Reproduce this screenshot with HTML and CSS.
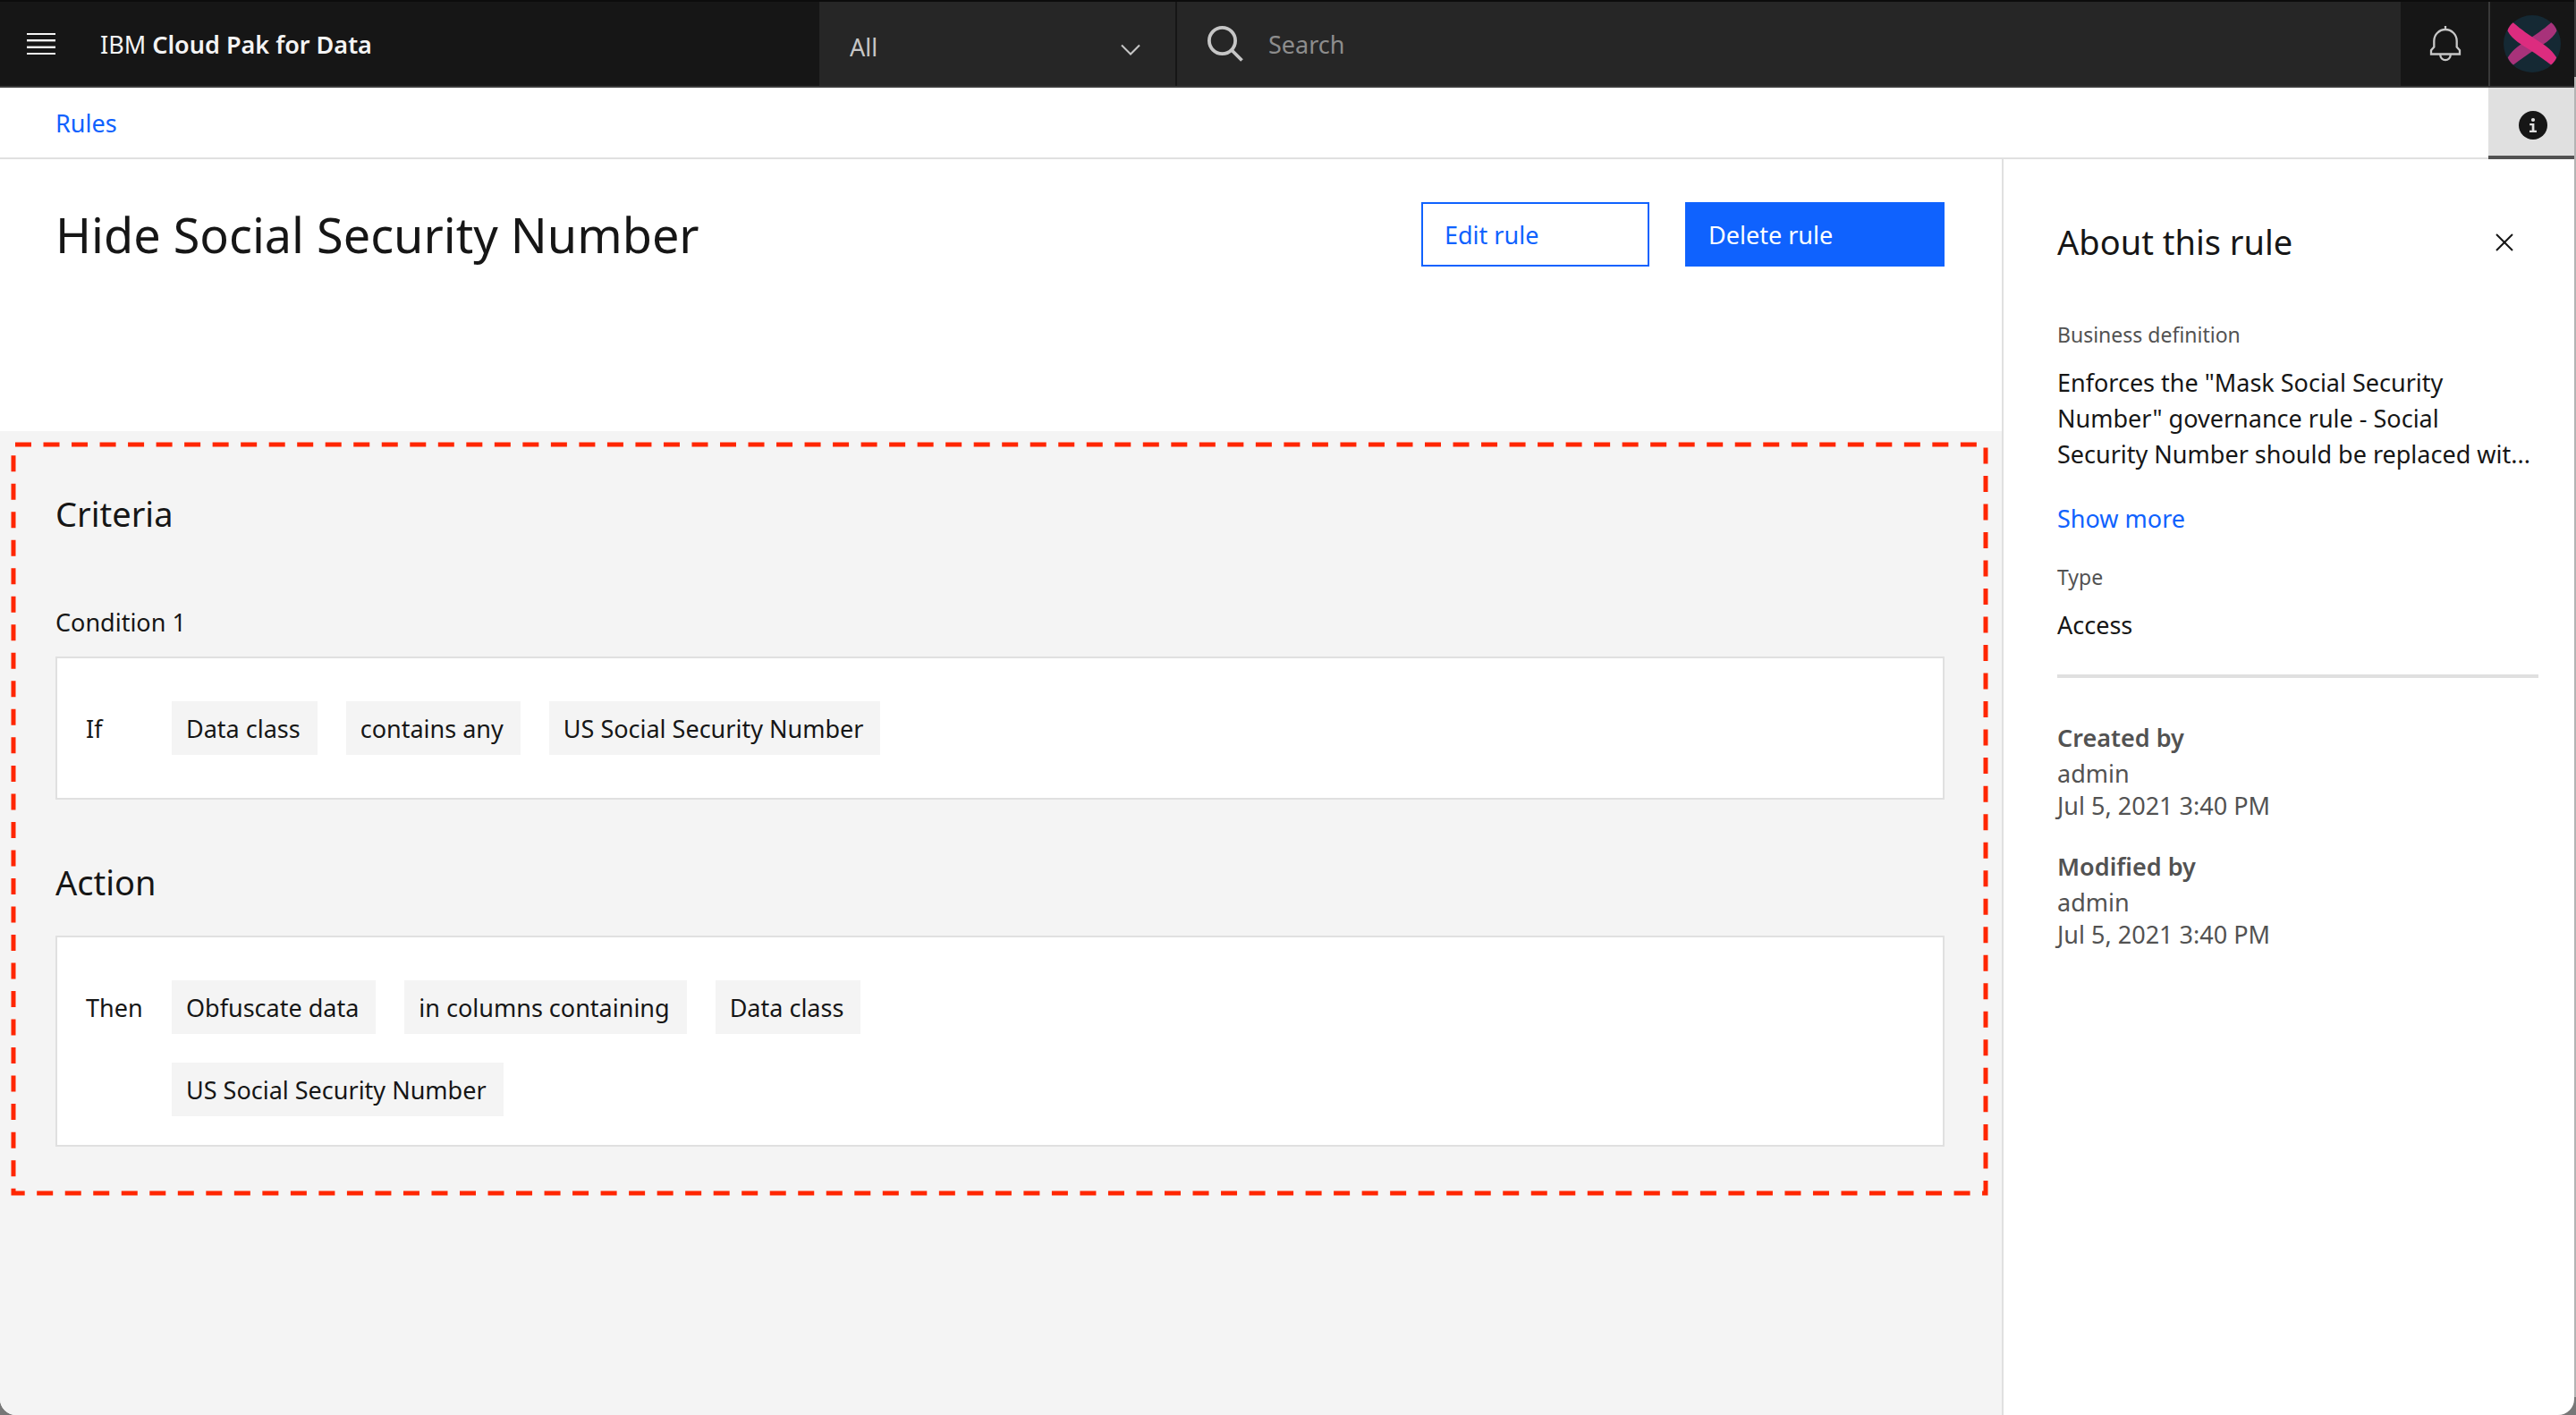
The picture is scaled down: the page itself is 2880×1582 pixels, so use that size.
FILE: index.html
```html
<!DOCTYPE html>
<html lang="en">
<head>
  <meta charset="utf-8">
  <title>Hide Social Security Number</title>
  <link rel="stylesheet" href="styles.css">
</head>
<body>
  <div class="app">
    <header class="topbar">
      <div class="brand-area">
        <button class="icon-button menu-button" type="button" aria-label="Menu">
          <svg width="32" height="24" viewBox="0 0 32 24" fill="currentColor" aria-hidden="true">
            <rect width="32" height="2"/><rect y="7" width="32" height="2.4"/><rect y="14.6" width="32" height="2.4"/><rect y="22" width="32" height="2"/>
          </svg>
        </button>
        <a class="brand" href="#">IBM <strong>Cloud Pak for Data</strong></a>
      </div>
      <div class="scope">
        <select class="scope-select" aria-label="Search scope">
          <option>All</option>
        </select>
        <svg class="scope-chevron" width="22" height="14" viewBox="0 0 22 14" fill="none" stroke="currentColor" stroke-width="2" aria-hidden="true"><path d="M1 1.5 11 11.5 21 1.5"/></svg>
      </div>
      <label class="search">
        <svg width="40" height="40" viewBox="0 0 40 40" fill="none" stroke="currentColor" stroke-width="3.8" aria-hidden="true"><circle cx="16.5" cy="16.5" r="14.600"/><path d="M27 27 38.5 38.5"/></svg>
        <input class="search-input" type="search" placeholder="Search" aria-label="Search">
      </label>
      <button class="icon-button bell-button" type="button" aria-label="Notifications">
        <svg width="36" height="40" viewBox="0 0 36 40" fill="none" stroke="currentColor" stroke-width="2.3" aria-hidden="true">
          <path d="M18 0V4M18 4A12.700 12.700 0 0 0 5.300 16.700V23.500L2 27.200V31.500H34V27.200L30.700 23.500V16.700A12.700 12.700 0 0 0 18 4Z"/><path d="M12.300 31.500V32.500A5.700 5.700 0 0 0 23.700 32.500V31.500"/>
        </svg>
      </button>
      <button class="icon-button avatar-button" type="button" aria-label="Account">
        <svg width="64" height="64" viewBox="0 0 64 64" aria-hidden="true">
          <circle cx="32" cy="32" r="32" fill="#152934"/>
          <path fill="#a8327a" d="M53.300 8.200Q58.300 12 59.500 17.500C54 28 43 33 35 38.500S19 49 11 55.500Q6 51.500 4.800 47.200C11 37 20 32.500 28 27S43 17 53.300 8.200Z"/>
          <path fill="#dc2c7f" d="M10.700 8.200Q5.700 12 4.500 17.500C10 28 21 33 29 38.500S45 49 53 55.500Q58 51.500 59.200 47.200C53 37 44 32.500 36 27S21 17 10.700 8.200Z"/>
        </svg>
      </button>
    </header>

    <nav class="crumbs" aria-label="Breadcrumb">
      <a class="link" href="#">Rules</a>
      <button class="icon-button info-button" type="button" aria-label="About this rule" aria-pressed="true">
        <svg width="32" height="32" viewBox="0 0 32 32" aria-hidden="true"><circle cx="16" cy="16" r="16" fill="#161616"/><circle cx="16" cy="10" r="2.100" fill="#e0e0e0"/><path fill="#e0e0e0" d="M12.200 14H17.400V21.800H20V24H12V21.800H14.700V16.200H12.200Z"/></svg>
      </button>
    </nav>

    <div class="layout">
      <main class="content">
        <div class="title-block">
          <h1 class="title">Hide Social Security Number</h1>
          <div class="actions">
            <button class="button button-outline" type="button">Edit rule</button>
            <button class="button button-primary" type="button">Delete rule</button>
          </div>
        </div>

        <section class="rule">
          <svg class="highlight" aria-hidden="true"><rect class="highlight-line" width="100%" height="100%"/></svg>
          <h2 class="heading criteria-heading">Criteria</h2>
          <h3 class="condition">Condition 1</h3>
          <div class="card">
            <span class="keyword">If</span>
            <ul class="tags">
              <li class="tag">Data class</li>
              <li class="tag">contains any</li>
              <li class="tag">US Social Security Number</li>
            </ul>
          </div>
          <h2 class="heading action-heading">Action</h2>
          <div class="card">
            <span class="keyword">Then</span>
            <ul class="tags">
              <li class="tag">Obfuscate data</li>
              <li class="tag">in columns containing</li>
              <li class="tag">Data class</li>
              <li class="tag">US Social Security Number</li>
            </ul>
          </div>
        </section>
      </main>

      <aside class="about">
        <div class="about-header">
          <h2 class="heading">About this rule</h2>
          <button class="icon-button close-button" type="button" aria-label="Close">
            <svg width="20" height="20" viewBox="0 0 20 20" fill="none" stroke="currentColor" stroke-width="2" aria-hidden="true"><path d="M1 1 19 19M19 1 1 19"/></svg>
          </button>
        </div>
        <h3 class="label">Business definition</h3>
        <p class="value">Enforces the "Mask Social Security Number" governance rule - Social <span class="phrase">Security Number</span> should be replaced wit...</p>
        <button class="link show-more" type="button">Show more</button>
        <h3 class="label">Type</h3>
        <p class="value">Access</p>
        <hr class="divider">
        <div class="audit">
          <h3 class="audit-title">Created by</h3>
          <p class="audit-name">admin</p>
          <p class="audit-date">Jul 5, 2021 3:40 PM</p>
        </div>
        <div class="audit">
          <h3 class="audit-title">Modified by</h3>
          <p class="audit-name">admin</p>
          <p class="audit-date">Jul 5, 2021 3:40 PM</p>
        </div>
      </aside>
    </div>
  </div>
</body>
</html>
```
FILE: styles.css
```css
* {
  box-sizing: border-box;
}

body {
  margin: 0;
  padding-right: 2px;
  background: linear-gradient(#3c3c3c 86px, #b4b4b4 86px calc(100% - 20px), #777 calc(100% - 20px));
  color: #161616;
  font-family: "Noto Sans", "Liberation Sans", sans-serif;
  font-size: 27px;
  line-height: 40px;
}

h1, h2, h3, p, ul {
  margin: 0;
  padding: 0;
  font-weight: 400;
  font-size: inherit;
}

button, input, select {
  margin: 0;
  padding: 0;
  border: 0;
  border-radius: 0;
  background: none;
  color: inherit;
  font: inherit;
}

.app {
  display: flex;
  flex-direction: column;
  min-height: 100vh;
  overflow: hidden;
  border-radius: 0 0 18px 18px;
  background: #fff;
}

.icon-button {
  display: flex;
  flex: none;
  align-items: center;
  justify-content: center;
}

.link {
  color: #0f62fe;
  text-decoration: none;
}

/* Top bar */

.topbar {
  display: flex;
  height: 98px;
  border-top: 2px solid #0c0c0c;
  border-bottom: 2px solid #393939;
  background: #161616;
  color: #f4f4f4;
}

.brand-area {
  display: flex;
  flex: none;
  align-items: center;
  gap: 20px;
  width: 916px;
}

.menu-button {
  width: 92px;
  height: 100%;
}

.brand {
  padding-top: 2px;
  color: inherit;
  text-decoration: none;
}

.brand strong {
  font-weight: 600;
}

.scope {
  position: relative;
  flex: none;
  width: 400px;
  border-right: 2px solid #161616;
  background: #262626;
  color: #c6c6c6;
}

.scope-select {
  width: 100%;
  height: 100%;
  padding: 8px 34px 0;
  appearance: none;
}

.scope-chevron {
  position: absolute;
  top: 47px;
  right: 39px;
  pointer-events: none;
}

.search {
  display: flex;
  flex: 1;
  align-items: center;
  gap: 28px;
  padding-left: 34px;
  background: #262626;
  color: #c6c6c6;
}

.search-input {
  flex: 1;
  min-width: 0;
  padding-top: 2px;
}

.search-input::placeholder {
  color: #8d8d8d;
}

.bell-button {
  width: 98px;
  padding-left: 2px;
  color: #c6c6c6;
}

.avatar-button {
  width: 96px;
  border-left: 2px solid #393939;
}

/* Breadcrumb row */

.crumbs {
  display: flex;
  align-items: center;
  justify-content: space-between;
  height: 80px;
  padding: 2px 0 0 62px;
  border-bottom: 2px solid #e0e0e0;
}

.info-button {
  width: 96px;
  height: 80px;
  margin: -2px 0;
  padding: 8px 0 0 4px;
  border-bottom: 4px solid #525252;
  background: #e0e0e0;
}

/* Page columns */

.layout {
  display: flex;
  flex: 1;
}

.content {
  flex: 1;
  background: #f4f4f4;
}

.title-block {
  display: flex;
  align-items: flex-start;
  justify-content: space-between;
  height: 304px;
  padding: 48px 64px 0 62px;
  background: #fff;
}

.title {
  font-size: 54px;
  line-height: 72px;
}

.actions {
  display: flex;
  gap: 40px;
}

.button {
  height: 72px;
  padding: 2px 24px 0;
  border: 2px solid #0f62fe;
  text-align: left;
}

.button-outline {
  width: 255px;
  color: #0f62fe;
}

.button-primary {
  width: 290px;
  background: #0f62fe;
  color: #fff;
}

/* Rule definition */

.rule {
  position: relative;
  padding: 68px 64px 68px 62px;
}

.highlight {
  position: absolute;
  top: 15px;
  left: 15px;
  width: calc(100% - 33px);
  height: calc(100% - 31px);
  overflow: visible;
  pointer-events: none;
}

.highlight-line {
  fill: none;
  stroke: #ff2600;
  stroke-width: 5;
  stroke-dasharray: 18 13.52;
  stroke-dashoffset: -2;
}

.heading {
  font-size: 38px;
  line-height: 48px;
}

.criteria-heading {
  margin-bottom: 78px;
}

.condition {
  margin-bottom: 18px;
}

.action-heading {
  margin: 68px 0 36px;
}

.card {
  display: flex;
  min-height: 160px;
  padding: 48px 32px 32px;
  border: 2px solid #e0e0e0;
  background: #fff;
}

.keyword {
  flex: none;
  width: 96px;
  padding-top: 2px;
  line-height: 58px;
}

.tags {
  display: flex;
  flex-wrap: wrap;
  align-content: flex-start;
  gap: 32px;
  max-width: 900px;
  list-style: none;
}

.tag {
  padding: 2px 19px 0 16px;
  background: #f4f4f4;
  line-height: 58px;
}

/* Side panel */

.about {
  flex: none;
  width: 640px;
  padding: 68px 40px 0 60px;
  border-left: 2px solid #e0e0e0;
}

.about-header {
  display: flex;
  align-items: center;
  justify-content: space-between;
  margin-bottom: 64px;
  padding-right: 14px;
}

.close-button {
  width: 48px;
  height: 48px;
  padding-top: 2px;
}

.label {
  margin-bottom: 18px;
  color: #525252;
  font-size: 23px;
  line-height: 32px;
}

.phrase {
  white-space: nowrap;
}

.show-more {
  display: block;
  margin: 32px 0 29px;
}

.divider {
  height: 4px;
  margin: 35px 0 47px;
  border: 0;
  background: #e0e0e0;
}

.audit {
  margin-bottom: 32px;
  color: #525252;
}

.audit-title {
  font-weight: 600;
}

.audit-date {
  line-height: 32px;
}
```
